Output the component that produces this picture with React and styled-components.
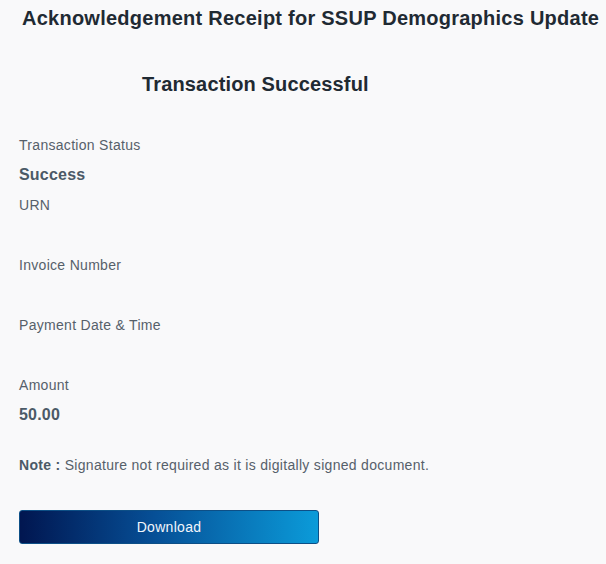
import React from "react";
import styled, { createGlobalStyle } from "styled-components";

const GlobalStyle = createGlobalStyle`
  html, body {
    margin: 0;
    padding: 0;
    background: #f9f9fa;
    font-family: "Liberation Sans", Arial, sans-serif;
  }
`;

const Page = styled.div`
  width: 606px;
  height: 564px;
  overflow: hidden;
  background: #f9f9fa;
  padding: 0 19px;
  box-sizing: border-box;
`;

const Title = styled.h1`
  margin: 0;
  padding: 6px 0 0 3px;
  font-size: 20px;
  line-height: 24px;
  font-weight: 700;
  letter-spacing: 0.25px;
  color: #1f2a33;
  white-space: nowrap;
`;

const Subtitle = styled.h2`
  margin: 0;
  padding: 42px 0 0 123px;
  font-size: 20px;
  line-height: 24px;
  font-weight: 700;
  letter-spacing: 0.15px;
  color: #1f2a33;
`;

const Fields = styled.div`
  display: flex;
  flex-direction: column;
  margin-top: 34px;
`;

const Field = styled.div`
  display: flex;
  flex-direction: column;
`;

const Label = styled.div`
  height: 30px;
  line-height: 30px;
  font-size: 14px;
  letter-spacing: 0.3px;
  color: #56606a;
`;

const Value = styled.div`
  height: 30px;
  line-height: 30px;
  font-size: 16px;
  font-weight: 700;
  letter-spacing: 0.2px;
  color: #4b5a67;
`;

const Note = styled.p`
  margin: 20px 0 0;
  font-size: 14px;
  line-height: 30px;
  letter-spacing: 0.3px;
  color: #56606a;
  b {
    color: #4b5a67;
  }
`;

const Button = styled.button`
  display: block;
  margin-top: 30px;
  width: 300px;
  height: 34px;
  border: 1px solid #0d4f86;
  border-radius: 3px;
  background: linear-gradient(90deg, #011650 0%, #064f96 45%, #0b9bd9 100%);
  color: #f2f6fb;
  font-family: "Liberation Sans", Arial, sans-serif;
  font-size: 14px;
  letter-spacing: 0.3px;
  cursor: pointer;
`;

const fields = [
  { label: "Transaction Status", value: "Success" },
  { label: "URN", value: "" },
  { label: "Invoice Number", value: "" },
  { label: "Payment Date & Time", value: "" },
  { label: "Amount", value: "50.00" },
];

const App = () => (
  <Page>
    <GlobalStyle />
    <Title>Acknowledgement Receipt for SSUP Demographics Update</Title>
    <Subtitle>Transaction Successful</Subtitle>
    <Fields>
      {fields.map((f) => (
        <Field key={f.label}>
          <Label>{f.label}</Label>
          <Value>{f.value}</Value>
        </Field>
      ))}
    </Fields>
    <Note>
      <b>Note :</b> Signature not required as it is digitally signed document.
    </Note>
    <Button>Download</Button>
  </Page>
);

export default App;
